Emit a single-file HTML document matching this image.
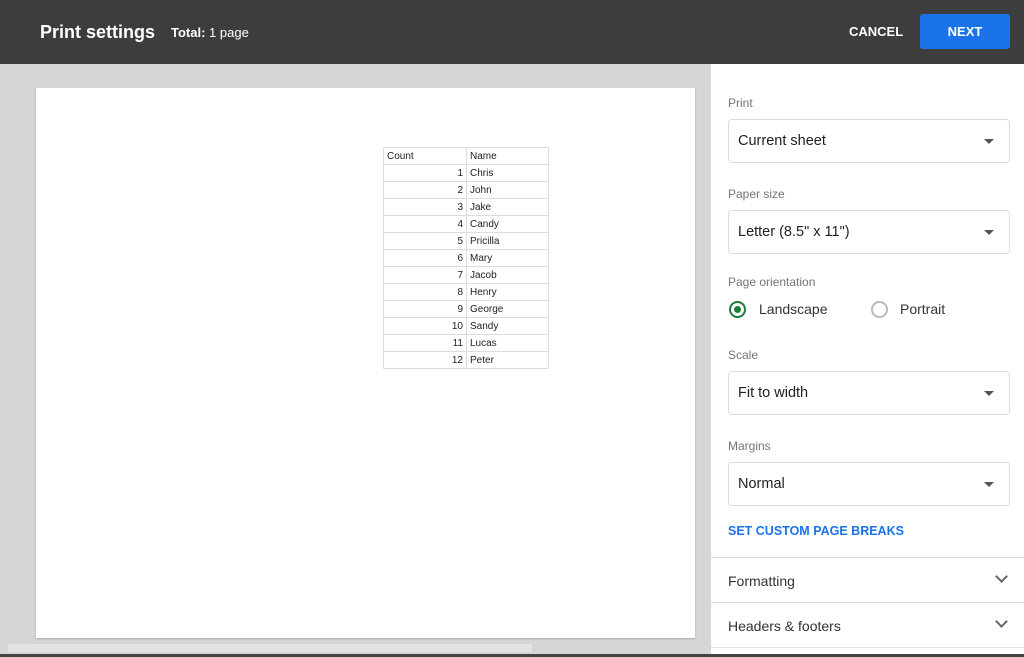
<!DOCTYPE html>
<html><head><style>
*{margin:0;padding:0;box-sizing:border-box}
html,body{width:1024px;height:657px;overflow:hidden}
body{font-family:"Liberation Sans",Arial,sans-serif;background:#d6d6d6;position:relative}
.hdr{position:absolute;left:0;top:0;width:1024px;height:64px;background:#3d3d3d;color:#fff}
.t1{position:absolute;left:40px;top:22px;font-size:18px;font-weight:bold}
.t2{position:absolute;left:171px;top:25px;font-size:13px}
.cancel{position:absolute;left:849px;top:24px;font-size:13px;font-weight:bold}
.next{position:absolute;left:920px;top:14px;width:90px;height:35px;background:#1a73e8;border-radius:3px;font-size:13px;font-weight:bold;text-align:center;line-height:35px;color:#fff}
.page{position:absolute;left:36px;top:88px;width:659px;height:550px;background:#fff;box-shadow:0 1px 2px #aaa}
table{position:absolute;left:347px;top:59px;border-collapse:collapse;font-size:10px;color:#222}
td{border:1px solid #ddd;height:17px;padding:0 3px;line-height:15px}
td.n{width:83px;text-align:right}
td.m{width:82px}
.panel{position:absolute;left:711px;top:64px;width:313px;height:590px;background:#fff;overflow:hidden}
.lbl{position:absolute;left:17px;font-size:12px;color:#757575}
.sel{position:absolute;left:17px;width:282px;height:44px;border:1px solid #dadce0;border-radius:4px;font-size:14.5px;color:#202124;padding:13px 0 0 9px}
.sel:after{content:"";position:absolute;right:15px;top:19px;border-left:5px solid transparent;border-right:5px solid transparent;border-top:5px solid #555}
.radio{position:absolute;top:237px;width:17px;height:17px;border-radius:50%;border:2px solid #bbb}
.radio.on{border-color:#188038}
.radio.on:after{content:"";position:absolute;left:3px;top:3px;width:7px;height:7px;border-radius:50%;background:#188038}
.rt{position:absolute;top:237px;font-size:14px;color:#333}
.link{position:absolute;left:17px;top:460px;font-size:12.5px;font-weight:bold;color:#1a73e8}
.sec{position:absolute;left:0;width:313px;height:45px;border-top:1px solid #e0e0e0;font-size:14px;color:#333;padding:15px 0 0 17px}
.chev{position:absolute;right:18px;top:14px;width:9px;height:9px;border-right:2px solid #666;border-bottom:2px solid #666;transform:rotate(45deg)}
.bot{position:absolute;left:0;top:654px;width:1024px;height:3px;background:#444}
.sb{position:absolute;left:8px;top:644px;width:524px;height:8px;background:#e3e3e3}
</style></head><body>
<div class="hdr"><div class="t1">Print settings</div><div class="t2"><b>Total:</b> 1 page</div><div class="cancel">CANCEL</div><div class="next">NEXT</div></div>
<div class="page"><table>
<tr><td class="m" style="width:83px">Count</td><td class="m">Name</td></tr>
<tr><td class="n">1</td><td class="m">Chris</td></tr>
<tr><td class="n">2</td><td class="m">John</td></tr>
<tr><td class="n">3</td><td class="m">Jake</td></tr>
<tr><td class="n">4</td><td class="m">Candy</td></tr>
<tr><td class="n">5</td><td class="m">Pricilla</td></tr>
<tr><td class="n">6</td><td class="m">Mary</td></tr>
<tr><td class="n">7</td><td class="m">Jacob</td></tr>
<tr><td class="n">8</td><td class="m">Henry</td></tr>
<tr><td class="n">9</td><td class="m">George</td></tr>
<tr><td class="n">10</td><td class="m">Sandy</td></tr>
<tr><td class="n">11</td><td class="m">Lucas</td></tr>
<tr><td class="n">12</td><td class="m">Peter</td></tr>
</table></div>
<div class="sb"></div>
<div class="panel">
<div class="lbl" style="top:32px">Print</div>
<div class="sel" style="top:55px">Current sheet</div>
<div class="lbl" style="top:123px">Paper size</div>
<div class="sel" style="top:146px">Letter (8.5" x 11")</div>
<div class="lbl" style="top:211px">Page orientation</div>
<div class="radio on" style="left:18px"></div><div class="rt" style="left:48px">Landscape</div>
<div class="radio" style="left:160px"></div><div class="rt" style="left:189px">Portrait</div>
<div class="lbl" style="top:284px">Scale</div>
<div class="sel" style="top:307px">Fit to width</div>
<div class="lbl" style="top:375px">Margins</div>
<div class="sel" style="top:398px">Normal</div>
<div class="link">SET CUSTOM PAGE BREAKS</div>
<div class="sec" style="top:493px">Formatting<div class="chev"></div></div>
<div class="sec" style="top:538px">Headers &amp; footers<div class="chev"></div></div>
<div class="sec" style="top:583px;height:7px;padding:0"></div>
</div>
<div class="bot"></div>
</body></html>
